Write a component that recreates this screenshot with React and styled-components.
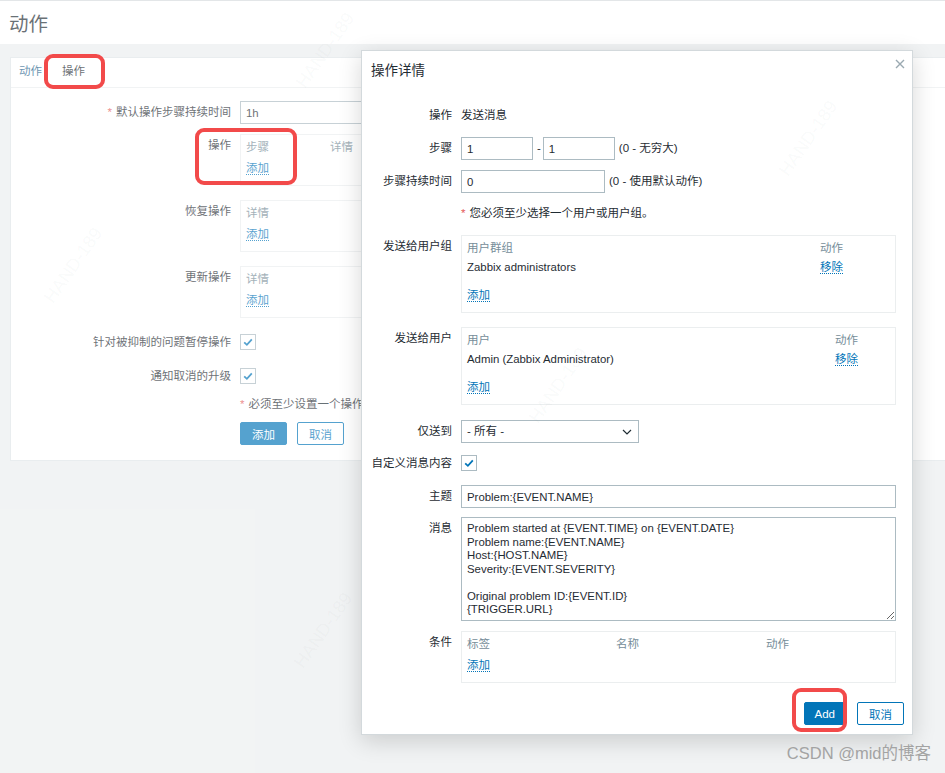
import React from 'react';
import styled, { createGlobalStyle } from 'styled-components';

const FONT = `"Liberation Sans", Arial, "Noto Sans CJK SC", sans-serif`;

const GlobalStyle = createGlobalStyle`
  html, body { margin: 0; padding: 0; }
  body {
    background: #ebeeef;
    font-family: ${FONT};
    font-size: 11.5px;
    color: #1f2c33;
  }
`;

const Page = styled.div`
  position: relative;
  width: 945px;
  height: 773px;
  overflow: hidden;
  background: #ebeeef;
`;

const Header = styled.header`
  height: 43px;
  border-top: 1px solid #d5dadd;
  background: #fff;
  padding-left: 9px;
  display: flex;
  align-items: center;
`;

const PageTitle = styled.h1`
  margin: 0;
  font-size: 19.5px;
  font-weight: normal;
  color: #1f2c33;
`;

const Main = styled.main`
  padding: 13px 0 0 10px;
`;

const Card = styled.section`
  background: #fff;
  border: 1px solid #dfe4e7;
  border-right: none;
  padding-bottom: 15px;
`;

const TabList = styled.nav`
  display: flex;
  gap: 20px;
  padding: 0 0 3px 8px;
  border-bottom: 1px solid #ebeeef;
`;

const Tab = styled.span`
  line-height: 26px;
  color: ${(p) => (p.$active ? '#1f2c33' : '#1d5f8c')};
`;

const Form = styled.div`
  padding-top: ${(p) => p.$pt || 0}px;
`;

const Row = styled.div`
  display: grid;
  grid-template-columns: ${(p) => p.$label}px 1fr;
  column-gap: 9px;
  align-items: start;
  margin-top: ${(p) => p.$mt || 0}px;
`;

const Label = styled.div`
  text-align: right;
  white-space: nowrap;
  line-height: ${(p) => p.$lh || 23}px;
  color: #1f2c33;
`;

const Req = styled.span`
  color: #e45959;
  margin-right: 4px;
`;

const Control = styled.div`
  display: flex;
  align-items: center;
  line-height: ${(p) => p.$lh || 23}px;
  white-space: nowrap;
`;

const TextInput = styled.input`
  box-sizing: border-box;
  width: ${(p) => p.$w}px;
  height: 23px;
  border: 1px solid #acbbc2;
  padding: 0 5px;
  font-family: ${FONT};
  font-size: 11.4px;
  color: #1f2c33;
  background: #fff;
  outline: none;
  margin: 0;
`;

const Dash = styled.span`
  margin: 0 2px 0 4px;
`;

const Note = styled.span`
  margin-left: 4px;
`;

const Box = styled.div`
  box-sizing: border-box;
  width: ${(p) => (p.$w ? `${p.$w}px` : '100%')};
  border: 1px solid #ebeeef;
  padding: 3px 5px 7px 5px;
  line-height: 20px;
`;

const BoxGrid = styled.div`
  display: grid;
  grid-template-columns: ${(p) => p.$cols};
`;

const HeadCell = styled.div`
  color: #768d99;
  line-height: 18px;
`;

const Cell = styled.div`
  line-height: 20px;
  font-size: ${(p) => (p.$latin ? '11.4px' : '11.5px')};
`;

const AddRow = styled.div`
  margin-top: ${(p) => p.$mt || 0}px;
  line-height: 20px;
`;

const Link = styled.a`
  color: #0275b8;
  text-decoration: none;
  border-bottom: 1px dotted #0275b8;
  cursor: pointer;
`;

const CheckBox = styled.span`
  display: inline-flex;
  align-items: center;
  justify-content: center;
  box-sizing: border-box;
  width: 16px;
  height: 16px;
  border: 1px solid #acbbc2;
  background: #fff;
  margin-top: ${(p) => p.$mt || 0}px;
`;

const Hint = styled.div`
  grid-column: 2;
  line-height: ${(p) => p.$lh || 20}px;
  white-space: nowrap;
`;

const Buttons = styled.div`
  grid-column: 2;
  display: flex;
  gap: ${(p) => p.$gap || 10}px;
`;

const Button = styled.button`
  box-sizing: border-box;
  height: 23px;
  padding: 0 ${(p) => p.$px || 11}px;
  margin: 0;
  font-family: ${FONT};
  font-size: 11.5px;
  border: 1px solid #0275b8;
  border-radius: 2px;
  background: ${(p) => (p.$primary ? '#0275b8' : '#fff')};
  color: ${(p) => (p.$primary ? '#fff' : '#0275b8')};
  cursor: pointer;
`;

const Shade = styled.div`
  position: absolute;
  inset: 0;
  background: rgba(255, 255, 255, 0.33);
  z-index: 1;
`;

const Dialog = styled.div`
  position: absolute;
  left: 361px;
  top: 50px;
  width: 552px;
  height: 685px;
  box-sizing: border-box;
  background: #fff;
  border: 1px solid #d3d9dc;
  box-shadow: 0 6px 22px rgba(0, 0, 0, 0.16);
  z-index: 2;
  display: flex;
  flex-direction: column;
  padding: 10px 16px 9px 9px;
`;

const DialogTitle = styled.h2`
  margin: 0;
  font-size: 13.5px;
  font-weight: normal;
  line-height: 20px;
  color: #1f2c33;
`;

const Close = styled.button`
  position: absolute;
  top: 7px;
  right: 6px;
  width: 12px;
  height: 12px;
  padding: 0;
  border: none;
  background: transparent;
  display: flex;
  align-items: center;
  justify-content: center;
`;

const Select = styled.div`
  box-sizing: border-box;
  width: 178px;
  height: 23px;
  border: 1px solid #acbbc2;
  padding: 0 6px 0 5px;
  display: flex;
  align-items: center;
  justify-content: space-between;
  line-height: 21px;
`;

const TextArea = styled.textarea`
  box-sizing: border-box;
  width: 100%;
  height: 104px;
  border: 1px solid #acbbc2;
  padding: 4px 5px;
  margin: 0;
  font-family: ${FONT};
  font-size: 11.4px;
  line-height: 13.5px;
  color: #1f2c33;
  outline: none;
  overflow: hidden;
  display: block;
`;

const Footer = styled.div`
  margin-top: auto;
  margin-right: -8px;
  display: flex;
  justify-content: flex-end;
  gap: 11px;
`;

const Highlight = styled.div`
  position: absolute;
  left: ${(p) => p.$x}px;
  top: ${(p) => p.$y}px;
  width: ${(p) => p.$w}px;
  height: ${(p) => p.$h}px;
  box-sizing: border-box;
  border: 4px solid #f24a4a;
  border-radius: 9px;
  z-index: 5;
  pointer-events: none;
`;

const Watermark = styled.div`
  position: absolute;
  left: ${(p) => p.$x}px;
  top: ${(p) => p.$y}px;
  transform: rotate(-55deg);
  font-family: ${FONT};
  font-size: 18px;
  color: rgba(120, 130, 135, 0.05);
  z-index: 4;
  pointer-events: none;
  white-space: nowrap;
`;

const Credit = styled.div`
  position: absolute;
  right: 14px;
  bottom: 9px;
  font-family: ${FONT};
  font-size: 16.5px;
  color: #a3a3a3;
  z-index: 4;
`;

const Check = () => (
  <svg width="12" height="12" viewBox="0 0 12 12">
    <path d="M2.2 6.3 L4.9 8.8 L9.8 3.4" stroke="#0275b8" strokeWidth="1.8" fill="none" />
  </svg>
);

const Chevron = () => (
  <svg width="10" height="6" viewBox="0 0 10 6">
    <path d="M1 1 L5 5 L9 1" stroke="#1f2c33" strokeWidth="1.2" fill="none" />
  </svg>
);

const CloseIcon = () => (
  <svg width="10" height="10" viewBox="0 0 10 10">
    <path d="M1 1 L9 9 M9 1 L1 9" stroke="#9aa9b1" strokeWidth="1.4" fill="none" />
  </svg>
);

const OpBox = ({ heads, cols, w }) => (
  <Box $w={w}>
    <BoxGrid $cols={cols}>
      {heads.map((h) => (
        <HeadCell key={h}>{h}</HeadCell>
      ))}
    </BoxGrid>
    <AddRow $mt={2}>
      <Link>添加</Link>
    </AddRow>
  </Box>
);

const MemberBox = ({ head, item, cols }) => (
  <Box>
    <BoxGrid $cols={cols}>
      <HeadCell>{head}</HeadCell>
      <HeadCell>动作</HeadCell>
      <Cell $latin>{item}</Cell>
      <Cell>
        <Link>移除</Link>
      </Cell>
    </BoxGrid>
    <AddRow $mt={8}>
      <Link>添加</Link>
    </AddRow>
  </Box>
);

const message = `Problem started at {EVENT.TIME} on {EVENT.DATE}
Problem name:{EVENT.NAME}
Host:{HOST.NAME}
Severity:{EVENT.SEVERITY}

Original problem ID:{EVENT.ID}
{TRIGGER.URL}`;

export default function App() {
  return (
    <>
      <GlobalStyle />
      <Page>
        <Header>
          <PageTitle>动作</PageTitle>
        </Header>
        <Main>
          <Card>
            <TabList>
              <Tab>动作</Tab>
              <Tab $active>操作</Tab>
            </TabList>
            <Form $pt={13}>
              <Row $label={220}>
                <Label>
                  <Req>*</Req>默认操作步骤持续时间
                </Label>
                <Control>
                  <TextInput $w={300} readOnly value="1h" />
                </Control>
              </Row>
              <Row $label={220} $mt={10}>
                <Label>操作</Label>
                <OpBox heads={['步骤', '详情']} cols="84px 1fr" w={560} />
              </Row>
              <Row $label={220} $mt={14}>
                <Label>恢复操作</Label>
                <OpBox heads={['详情']} cols="1fr" w={560} />
              </Row>
              <Row $label={220} $mt={14}>
                <Label>更新操作</Label>
                <OpBox heads={['详情']} cols="1fr" w={560} />
              </Row>
              <Row $label={220} $mt={12}>
                <Label $lh={24}>针对被抑制的问题暂停操作</Label>
                <Control>
                  <CheckBox $mt={4}>
                    <Check />
                  </CheckBox>
                </Control>
              </Row>
              <Row $label={220} $mt={10}>
                <Label $lh={24}>通知取消的升级</Label>
                <Control>
                  <CheckBox $mt={4}>
                    <Check />
                  </CheckBox>
                </Control>
              </Row>
              <Row $label={220} $mt={6}>
                <Hint>
                  <Req>*</Req>必须至少设置一个操作。
                </Hint>
              </Row>
              <Row $label={220} $mt={8}>
                <Buttons $gap={10}>
                  <Button $primary>添加</Button>
                  <Button>取消</Button>
                </Buttons>
              </Row>
            </Form>
          </Card>
        </Main>

        <Shade />

        <Watermark $x={282} $y={40}>HAND-189</Watermark>
        <Watermark $x={30} $y={255}>HAND-189</Watermark>
        <Watermark $x={765} $y={128}>HAND-189</Watermark>
        <Watermark $x={515} $y={375}>HAND-189</Watermark>
        <Watermark $x={280} $y={620}>HAND-189</Watermark>

        <Dialog>
          <DialogTitle>操作详情</DialogTitle>
          <Close aria-label="close">
            <CloseIcon />
          </Close>
          <Form $pt={23}>
            <Row $label={81}>
              <Label>操作</Label>
              <Control>发送消息</Control>
            </Row>
            <Row $label={81} $mt={10}>
              <Label>步骤</Label>
              <Control>
                <TextInput $w={72} readOnly value="1" />
                <Dash>-</Dash>
                <TextInput $w={72} readOnly value="1" />
                <Note>(0 - 无穷大)</Note>
              </Control>
            </Row>
            <Row $label={81} $mt={10}>
              <Label>步骤持续时间</Label>
              <Control>
                <TextInput $w={144} readOnly value="0" />
                <Note>(0 - 使用默认动作)</Note>
              </Control>
            </Row>
            <Row $label={81} $mt={9}>
              <Hint $lh={23}>
                <Req>*</Req>您必须至少选择一个用户或用户组。
              </Hint>
            </Row>
            <Row $label={81} $mt={10}>
              <Label>发送给用户组</Label>
              <MemberBox head="用户群组" item="Zabbix administrators" cols="353px 1fr" />
            </Row>
            <Row $label={81} $mt={14}>
              <Label>发送给用户</Label>
              <MemberBox head="用户" item="Admin (Zabbix Administrator)" cols="368px 1fr" />
            </Row>
            <Row $label={81} $mt={15}>
              <Label>仅送到</Label>
              <Control>
                <Select>
                  <span>- 所有 -</span>
                  <Chevron />
                </Select>
              </Control>
            </Row>
            <Row $label={81} $mt={8}>
              <Label $lh={24}>自定义消息内容</Label>
              <Control>
                <CheckBox $mt={4}>
                  <Check />
                </CheckBox>
              </Control>
            </Row>
            <Row $label={81} $mt={10}>
              <Label>主题</Label>
              <Control>
                <TextInput $w={435} readOnly value="Problem:{EVENT.NAME}" />
              </Control>
            </Row>
            <Row $label={81} $mt={9}>
              <Label>消息</Label>
              <TextArea readOnly value={message} />
            </Row>
            <Row $label={81} $mt={10}>
              <Label>条件</Label>
              <OpBox heads={['标签', '名称', '动作']} cols="149px 150px 1fr" />
            </Row>
          </Form>
          <Footer>
            <Button $primary $px={10}>Add</Button>
            <Button>取消</Button>
          </Footer>
        </Dialog>

        <Highlight $x={44} $y={54} $w={61} $h={35} />
        <Highlight $x={195} $y={128} $w={102} $h={57} />
        <Highlight $x={792} $y={688} $w={55} $h={44} />

        <Credit>CSDN @mid的博客</Credit>
      </Page>
    </>
  );
}
